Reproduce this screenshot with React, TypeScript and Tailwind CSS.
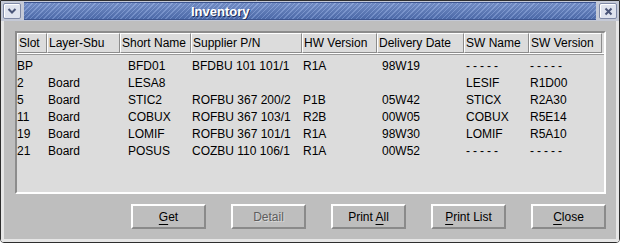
import React from "react";

const headers = [
  { label: "Slot", w: 30 },
  { label: "Layer-Sbu", w: 73 },
  { label: "Short Name", w: 71 },
  { label: "Supplier P/N", w: 111 },
  { label: "HW Version", w: 75 },
  { label: "Delivery Date", w: 87 },
  { label: "SW Name", w: 65 },
  { label: "SW Version", w: 73 },
];

// row text does not line up with the header text, so it has its own widths
const rowWidths = ["w-[31px]", "w-[80px]", "w-[64px]", "w-[111px]", "w-[79px]", "w-[84px]", "w-[64px]", "w-[70px]"];

const rows = [
  ["BP", "", "BFD01", "BFDBU 101 101/1", "R1A", "98W19", "-----", "-----"],
  ["2", "Board", "LESA8", "", "", "", "LESIF", "R1D00"],
  ["5", "Board", "STIC2", "ROFBU 367 200/2", "P1B", "05W42", "STICX", "R2A30"],
  ["11", "Board", "COBUX", "ROFBU 367 103/1", "R2B", "00W05", "COBUX", "R5E14"],
  ["19", "Board", "LOMIF", "ROFBU 367 101/1", "R1A", "98W30", "LOMIF", "R5A10"],
  ["21", "Board", "POSUS", "COZBU 110 106/1", "R1A", "00W52", "-----", "-----"],
];

function Mn({ children }: { children: React.ReactNode }) {
  return <span className="underline decoration-1 underline-offset-[3px]">{children}</span>;
}

function Btn({ children, disabled }: { children: React.ReactNode; disabled?: boolean }) {
  return (
    <div
      className={`flex h-[25px] w-[75px] items-center justify-center border-t-2 border-l-2 border-b-2 border-r-2 border-t-white border-l-white border-b-[#8a8a8a] border-r-[#8a8a8a] bg-[#bebebe] ${
        disabled ? "text-[#5e5e5e] [text-shadow:1px_1px_0_#d8d8d8]" : "text-black"
      }`}
    >
      <span className="whitespace-pre">{children}</span>
    </div>
  );
}

function TitleButton({ kind }: { kind: "menu" | "close" }) {
  return (
    <div className="flex h-[16px] w-[18px] shrink-0 items-center justify-center rounded-[2px] border border-[#7f89a6] bg-[#dfe3ee] shadow-[inset_1px_1px_0_#ffffff]">
      {kind === "menu" ? (
        <svg width="10" height="8" viewBox="0 0 10 8">
          <path d="M1.5 2 L5 5.5 L8.5 2" fill="none" stroke="#4a5578" strokeWidth="2" />
        </svg>
      ) : (
        <svg width="9" height="9" viewBox="0 0 9 9">
          <path d="M1.5 1.5 L7.5 7.5 M7.5 1.5 L1.5 7.5" fill="none" stroke="#4a5578" strokeWidth="2" />
        </svg>
      )}
    </div>
  );
}

export default function App() {
  return (
    <div className="h-[245px] w-[620px] bg-white font-['Liberation_Sans',Arial,sans-serif] text-[12px] text-black">
      <div className="flex h-[243px] w-[620px] flex-col overflow-hidden rounded-b-[4px] border border-[#2e2e2e]">
        {/* title bar */}
        <div className="flex h-[20px] shrink-0 items-center gap-[3px] bg-[#c4c9d6] px-[2px]">
          <TitleButton kind="menu" />
          <div className="flex h-[18px] flex-1 items-center border-y border-[#3d5590] bg-[linear-gradient(180deg,rgba(255,255,255,0.18),rgba(0,0,0,0.08)),repeating-linear-gradient(135deg,#5272b6_0px,#5272b6_2.2px,#7492d1_2.2px,#7492d1_3.2px)] pl-[167px]">
            <span className="font-['Liberation_Sans',Arial,sans-serif] text-[13px] font-bold leading-none text-white [text-shadow:1px_1px_0_#1f2f5c]">
              Inventory
            </span>
          </div>
          <TitleButton kind="close" />
        </div>

        {/* body */}
        <div className="flex flex-1 flex-col border-x-[3px] border-b-[3px] border-[#e6e6e6] bg-[#bebebe] pl-[11px] pr-[10px] pt-[10px]">
          <div className="flex h-[163px] w-[591px] flex-col border-2 border-t-[#8c8c8c] border-l-[#8c8c8c] border-b-white border-r-white bg-[#dcdcdc]">
            <div className="flex h-[20px] shrink-0">
              {headers.map((h) => (
                <div
                  key={h.label}
                  style={{ width: h.w }}
                  className="flex shrink-0 items-center whitespace-nowrap border border-t-white border-l-white border-b-[#8c8c8c] border-r-[#8c8c8c] bg-[#dcdcdc] pl-[1px] leading-none"
                >
                  {h.label}
                </div>
              ))}
            </div>
            <div className="h-[2px] shrink-0 border-b border-b-[#9a9a9a] bg-white" />
            <div className="flex flex-col pt-[2px]">
              {rows.map((r, i) => (
                <div key={i} className="flex h-[17px] items-center">
                  {r.map((c, j) => (
                    <div
                      key={j}
                      className={`${rowWidths[j]} shrink-0 whitespace-nowrap leading-none ${
                        c === "-----" ? "tracking-[3px]" : ""
                      }`}
                    >
                      {c}
                    </div>
                  ))}
                </div>
              ))}
            </div>
          </div>

          <div className="mt-[10px] flex w-[591px] justify-end gap-[25px]">
            <Btn>
              <Mn>G</Mn>et
            </Btn>
            <Btn disabled>Detail</Btn>
            <Btn>
              Print <Mn>A</Mn>ll
            </Btn>
            <Btn>
              <Mn>P</Mn>rint List
            </Btn>
            <Btn>
              <Mn>C</Mn>lose
            </Btn>
          </div>
        </div>
      </div>
    </div>
  );
}
